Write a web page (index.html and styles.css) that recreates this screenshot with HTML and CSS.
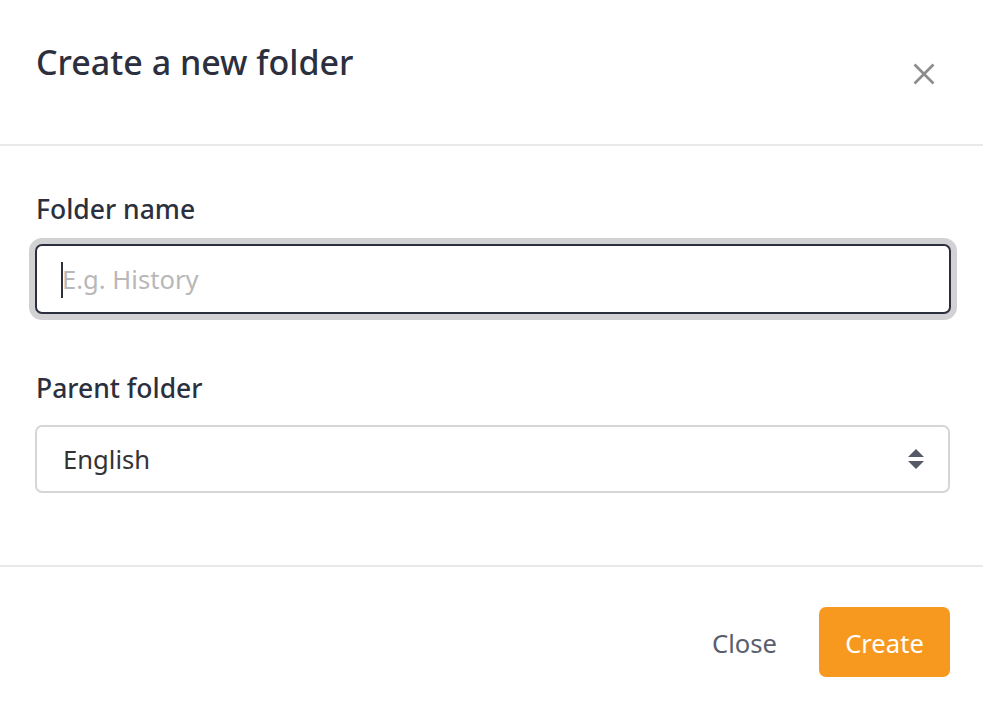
FILE: index.html
```html
<!DOCTYPE html>
<html lang="en">
<head>
<meta charset="utf-8">
<title>Create a new folder</title>
<link rel="stylesheet" href="styles.css">
</head>
<body>
<div class="modal">
  <header class="modal-header">
    <h1 class="modal-title">Create a new folder</h1>
    <button class="close-btn" aria-label="Close">
      <svg width="22" height="22" viewBox="0 0 22 22"><path d="M1.5 1.5 L20.5 20.5 M20.5 1.5 L1.5 20.5" stroke="#8c8c8c" stroke-width="2.6" fill="none"/></svg>
    </button>
  </header>
  <section class="modal-body">
    <label class="field-label" for="fname">Folder name</label>
    <div class="input-wrap">
      <input id="fname" class="text-input" type="text" placeholder="E.g. History">
      <span class="caret"></span>
    </div>
    <label class="field-label second" for="parent">Parent folder</label>
    <div class="select">
      <span class="select-value">English</span>
      <svg class="select-arrows" width="16" height="21" viewBox="0 0 16 21"><path d="M8 0 L16 8 L0 8 Z M0 12 L16 12 L8 20 Z" fill="#555a66"/></svg>
    </div>
  </section>
  <footer class="modal-footer">
    <button class="btn btn-link">Close</button>
    <button class="btn btn-primary">Create</button>
  </footer>
</div>
</body>
</html>
```
FILE: styles.css
```css
html, body {
  margin: 0;
  padding: 0;
  background: #ffffff;
}
body {
  font-family: "Noto Sans", "Open Sans", sans-serif;
  color: #2c303e;
}
.modal {
  width: 983px;
  height: 711px;
  overflow: hidden;
}
.modal-header {
  box-sizing: border-box;
  height: 146px;
  padding: 38px 48px 0 36px;
  border-bottom: 2px solid #e9e9e9;
  display: flex;
  justify-content: space-between;
  align-items: flex-start;
}
.modal-title {
  margin: 0;
  font-size: 34px;
  line-height: 48px;
  font-weight: 500;
  color: #2c303e;
}
.close-btn {
  background: none;
  border: 0;
  padding: 0;
  margin-top: 25px;
  width: 22px;
  height: 22px;
  display: flex;
}
.modal-body {
  box-sizing: border-box;
  height: 421px;
  padding: 44px 32px 0 35px;
  border-bottom: 2px solid #e9e9e9;
  display: flex;
  flex-direction: column;
}
.field-label {
  font-size: 26.5px;
  line-height: 38px;
  font-weight: 500;
  margin-left: 1px;
  margin-bottom: 16px;
  color: #2c303e;
}
.field-label.second {
  margin-top: 55px;
  margin-bottom: 18px;
}
.input-wrap {
  position: relative;
  height: 70px;
}
.text-input {
  box-sizing: border-box;
  width: 100%;
  height: 70px;
  border: 2px solid #2c303e;
  border-radius: 7px;
  box-shadow: 0 0 0 6px #d2d2d4;
  padding: 0 25px;
  font-family: inherit;
  font-size: 25.6px;
  color: #333;
  outline: none;
}
.text-input::placeholder {
  color: #b8b8b8;
}
.caret {
  position: absolute;
  left: 26px;
  top: 18px;
  width: 2px;
  height: 36px;
  background: #2c303e;
}
.select {
  box-sizing: border-box;
  width: 915px;
  height: 68px;
  border: 2px solid #d6d6d6;
  border-radius: 7px;
  padding: 0 24px 0 26px;
  display: flex;
  align-items: center;
  justify-content: space-between;
}
.select-value {
  font-size: 25.6px;
  color: #333;
}
.modal-footer {
  display: flex;
  justify-content: flex-end;
  align-items: center;
  gap: 20px;
  padding: 40px 33px 0 0;
}
.btn {
  font-family: inherit;
  font-size: 25.6px;
  border: 0;
  border-radius: 7px;
  height: 70px;
  padding-top: 3px;
  cursor: pointer;
}
.btn-link {
  background: none;
  color: #5a5e6c;
  padding-left: 22px;
  padding-right: 22px;
}
.btn-primary {
  background: #f7991f;
  color: #ffffff;
  padding-left: 26px;
  padding-right: 26px;
  width: 131px;
}
```
